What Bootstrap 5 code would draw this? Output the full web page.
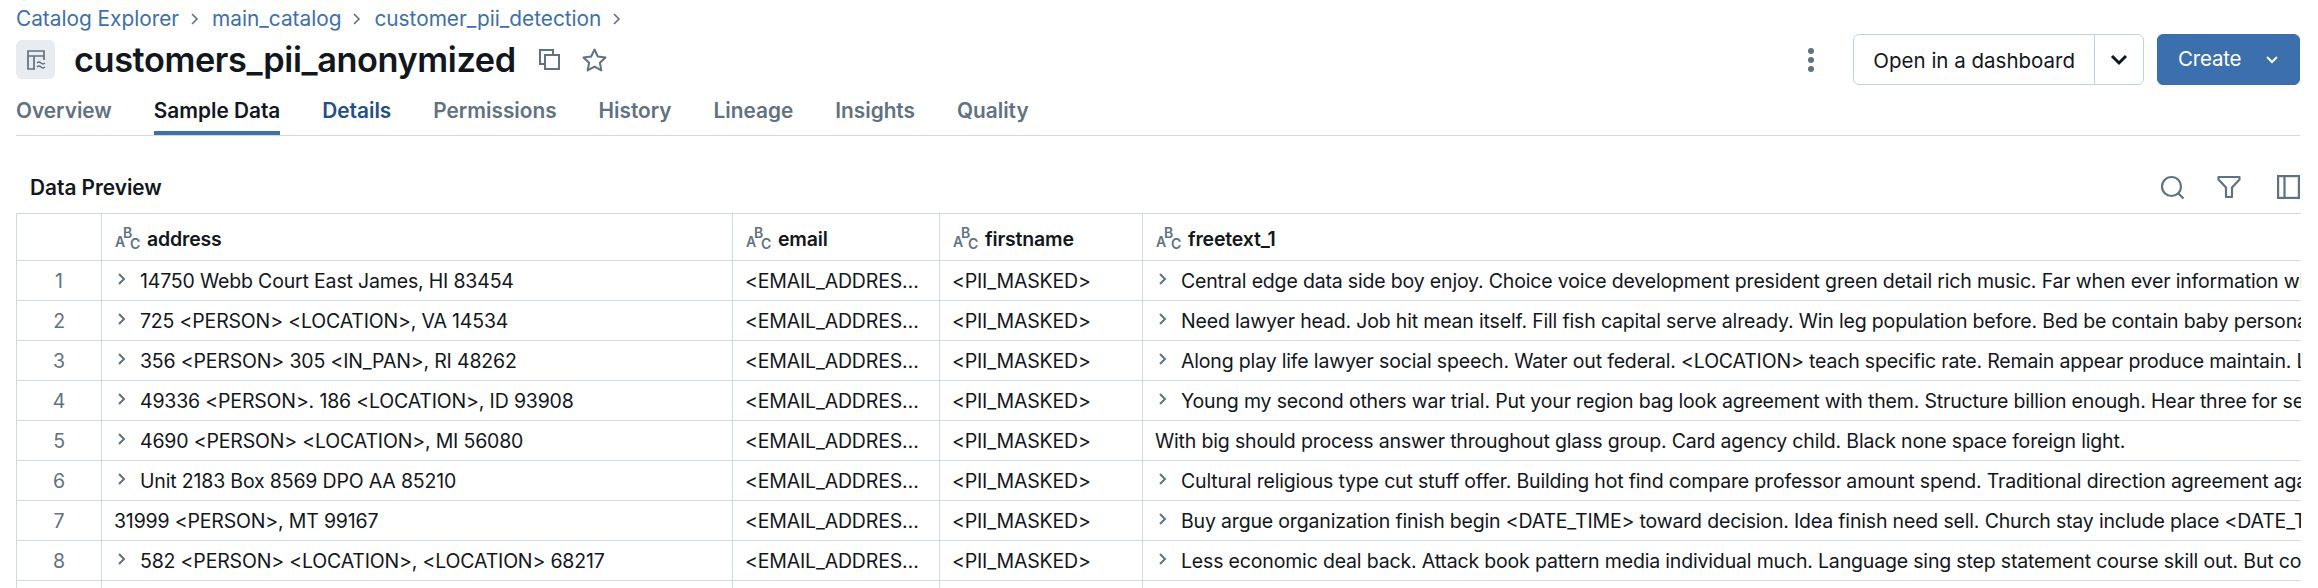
<!DOCTYPE html>
<html lang="en"><head><meta charset="utf-8"><title>customers_pii_anonymized</title>
<link href="https://cdn.jsdelivr.net/npm/bootstrap@5.3.0/dist/css/bootstrap.min.css" rel="stylesheet">
<style>
html,body{height:588px;overflow:hidden;background:#fff}
body{font-family:Inter,"Liberation Sans",sans-serif;font-size:19.5px;color:#11171c}
.page{padding:0 18px 0 16px}
.crumbs{height:34px;padding-top:4px;margin:0;--bs-breadcrumb-margin-bottom:0;flex-wrap:nowrap;align-items:center;gap:13px;font-size:20.800px;line-height:30px}
.crumbs .breadcrumb-item{padding:0;display:flex;align-items:center;gap:12px}
.crumbs .breadcrumb-item::before{display:none}
.crumbs a{color:#3b6fb0;text-decoration:none}
.head{height:51px}
.tbl-ico{width:39px;height:39px;border-radius:6px;background:#e8ecf1;margin-right:19px}
.ttl{font-size:34.300px;font-weight:600;line-height:40px;margin:0;letter-spacing:-.4px}
.ico{color:#5f7281;display:block}
.ico-copy{margin-left:22px}
.ico-star{margin-left:20px}
.btn-open{--bs-btn-color:#11171c;--bs-btn-border-color:#c6d0dc;--bs-btn-hover-border-color:#c6d0dc;--bs-btn-padding-x:19px;--bs-btn-padding-y:0;--bs-btn-font-size:20.500px;--bs-btn-border-radius:6px;height:51px;line-height:51px}
.btn-more{width:50px;padding:0;display:flex;align-items:center;justify-content:center}
.menu-wrap{margin-left:38px;margin-right:13px}
.btn-make{--bs-btn-bg:#3c6fad;--bs-btn-color:#fff;--bs-btn-border-color:#3c6fad;--bs-btn-hover-bg:#3c6fad;--bs-btn-hover-border-color:#3c6fad;--bs-btn-font-size:20.500px;--bs-btn-border-radius:6px;--bs-btn-padding-y:0;--bs-btn-padding-x:20px;height:51px;width:143px;letter-spacing:-.2px}
.tabbar{height:51px;border-bottom:1px solid #d1d9e1;gap:42px;flex-wrap:nowrap}
.tabbar .nav-link{padding:0;height:50px;line-height:51px;font-weight:600;color:#5f7281;font-size:20.800px;border-bottom:4px solid transparent;--bs-nav-link-hover-color:#5f7281}
.tabbar .nav-link.active{color:#11171c;border-bottom-color:#3c6fad}
.tabbar .nav-link.hot{color:#1f4f8c}
.tools{height:77px;padding:0 0 0 14px}
.tools h2{font-size:20.800px;font-weight:600;margin:40px 0 0;line-height:24px}
.tool-icons{gap:32px;margin-top:39px}
.ico-filter{margin-right:4px}
.grid{table-layout:fixed;width:2284px;margin:0;--bs-border-color:#d1d9e1;--bs-table-color:#11171c;font-size:19.5px;letter-spacing:-.17px}
.grid th,.grid td{padding:0 12px;white-space:nowrap;overflow:hidden;vertical-align:middle;height:40px;line-height:24px;box-shadow:none}
.grid th{height:47px;font-weight:600}
.grid tr>*:first-child{text-align:center;color:#5f7281;padding:0}
.grid tr>*:last-child{border-right:0}
.cut{text-overflow:ellipsis}
.exp{display:inline-block;width:10px;margin:0 13px 0 3px;vertical-align:2px}
.abc{display:inline-block;vertical-align:-5px;margin-right:6px}
.abc text{font-family:Inter,sans-serif;font-size:14px;font-weight:600;fill:#5f7281;letter-spacing:0}
</style></head>
<body><div class="page">
<nav aria-label="breadcrumb"><ol class="breadcrumb crumbs">
<li class="breadcrumb-item"><a href="#">Catalog Explorer</a><svg class="ico" width="8" height="14" viewBox="0 0 8 14" fill="none" stroke="currentColor" stroke-width="1.6"><path d="M1 2l5 5-5 5"/></svg></li>
<li class="breadcrumb-item"><a href="#">main_catalog</a><svg class="ico" width="8" height="14" viewBox="0 0 8 14" fill="none" stroke="currentColor" stroke-width="1.6"><path d="M1 2l5 5-5 5"/></svg></li>
<li class="breadcrumb-item"><a href="#">customer_pii_detection</a><svg class="ico" width="8" height="14" viewBox="0 0 8 14" fill="none" stroke="currentColor" stroke-width="1.6"><path d="M1 2l5 5-5 5"/></svg></li>
</ol></nav>
<div class="head d-flex align-items-center justify-content-between">
<div class="d-flex align-items-center">
<div class="tbl-ico d-flex align-items-center justify-content-center"><svg class="ico" width="20" height="22" viewBox="0 0 20 22" fill="none" stroke="currentColor" stroke-width="1.7"><path d="M9 20H2V2h16v9M2 7h16M8 7v13"/><path d="M11 14c1.500-1.400 2.500-1.400 4 0s2.500 1.400 4 0M11 18c1.500-1.400 2.500-1.400 4 0s2.500 1.400 4 0" stroke-width="1.400"/></svg></div>
<h1 class="ttl">customers_pii_anonymized</h1>
<svg class="ico ico-copy" width="23" height="23" viewBox="0 0 23 23" fill="none" stroke="currentColor" stroke-width="2"><path d="M6 16H2V2h13v5"/><rect x="7" y="7" width="14" height="14"/></svg>
<svg class="ico ico-star" width="27" height="26" viewBox="0 0 27 26" fill="none" stroke="currentColor" stroke-width="2" stroke-linejoin="round"><path d="M13.500 2.500l3.300 7 7.700 1-5.600 5.300 1.400 7.600-6.800-3.700-6.800 3.700 1.400-7.600L2.500 10.500l7.700-1z"/></svg>
</div>
<div class="d-flex align-items-center">
<svg class="ico" width="8" height="26" viewBox="0 0 8 26" fill="currentColor"><circle cx="4" cy="4" r="3"/><circle cx="4" cy="13" r="3"/><circle cx="4" cy="22" r="3"/></svg>
<div class="btn-group menu-wrap">
<button class="btn btn-open" type="button">Open in a dashboard</button>
<button class="btn btn-open btn-more" type="button" aria-label="More"><svg width="20" height="14" viewBox="0 0 20 14" fill="none" stroke="#11171c" stroke-width="3"><path d="M3 3l7 7 7-7"/></svg></button>
</div>
<button class="btn btn-make d-flex align-items-center justify-content-between" type="button">Create<svg width="14" height="10" viewBox="0 0 14 10" fill="none" stroke="#fff" stroke-width="2"><path d="M2 2l5 5 5-5"/></svg></button>
</div>
</div>
<ul class="nav tabbar">
<li class="nav-item"><a class="nav-link" href="#">Overview</a></li>
<li class="nav-item"><a class="nav-link active" href="#">Sample Data</a></li>
<li class="nav-item"><a class="nav-link hot" href="#">Details</a></li>
<li class="nav-item"><a class="nav-link" href="#">Permissions</a></li>
<li class="nav-item"><a class="nav-link" href="#">History</a></li>
<li class="nav-item"><a class="nav-link" href="#">Lineage</a></li>
<li class="nav-item"><a class="nav-link" href="#">Insights</a></li>
<li class="nav-item"><a class="nav-link" href="#">Quality</a></li>
</ul>
<div class="tools d-flex justify-content-between">
<h2>Data Preview</h2>
<div class="tool-icons d-flex align-items-start">
<svg class="ico" width="25" height="25" viewBox="0 0 25 25" fill="none" stroke="currentColor" stroke-width="2.200"><circle cx="11.500" cy="11.500" r="9.500"/><path d="M18.500 18.500l5 5"/></svg>
<svg class="ico ico-filter" width="24" height="24" viewBox="0 0 24 24" fill="none" stroke="currentColor" stroke-width="2.200" stroke-linejoin="round"><path d="M1.500 2h21v2.500L15 12.500V22H9v-9.500L1.500 4.500z"/></svg>
<svg class="ico" width="23" height="24" viewBox="0 0 23 24" fill="none" stroke="currentColor" stroke-width="2.200"><rect x="1.100" y="1.100" width="20.800" height="21.800"/><path d="M7.500 1v22"/></svg>
</div>
</div>
<table class="table table-bordered grid">
<colgroup><col style="width:85px"><col style="width:631px"><col style="width:207px"><col style="width:203px"><col style="width:1158px"></colgroup>
<thead><tr><th></th>
<th><svg class="abc" width="27" height="28" viewBox="0 0 27 28"><text x="1" y="24">A</text><text x="9" y="15">B</text><text x="16" y="26">C</text></svg>address</th>
<th><svg class="abc" width="27" height="28" viewBox="0 0 27 28"><text x="1" y="24">A</text><text x="9" y="15">B</text><text x="16" y="26">C</text></svg>email</th>
<th><svg class="abc" width="27" height="28" viewBox="0 0 27 28"><text x="1" y="24">A</text><text x="9" y="15">B</text><text x="16" y="26">C</text></svg>firstname</th>
<th><svg class="abc" width="27" height="28" viewBox="0 0 27 28"><text x="1" y="24">A</text><text x="9" y="15">B</text><text x="16" y="26">C</text></svg>freetext_1</th></tr></thead>
<tbody id="rows">
<tr><td>1</td><td><svg class="exp" width="10" height="14" viewBox="0 0 10 14" fill="none" stroke="#5f7281" stroke-width="2"><path d="M2 2l5 5-5 5"/></svg>14750 Webb Court East James, HI 83454</td><td class="cut">&lt;EMAIL_ADDRESS&gt;</td><td>&lt;PII_MASKED&gt;</td><td><svg class="exp" width="10" height="14" viewBox="0 0 10 14" fill="none" stroke="#5f7281" stroke-width="2"><path d="M2 2l5 5-5 5"/></svg>Central edge data side boy enjoy. Choice voice development president green detail rich music. Far when ever information which hold.</td></tr>
<tr><td>2</td><td><svg class="exp" width="10" height="14" viewBox="0 0 10 14" fill="none" stroke="#5f7281" stroke-width="2"><path d="M2 2l5 5-5 5"/></svg>725 &lt;PERSON&gt; &lt;LOCATION&gt;, VA 14534</td><td class="cut">&lt;EMAIL_ADDRESS&gt;</td><td>&lt;PII_MASKED&gt;</td><td><svg class="exp" width="10" height="14" viewBox="0 0 10 14" fill="none" stroke="#5f7281" stroke-width="2"><path d="M2 2l5 5-5 5"/></svg>Need lawyer head. Job hit mean itself. Fill fish capital serve already. Win leg population before. Bed be contain baby personal.</td></tr>
<tr><td>3</td><td><svg class="exp" width="10" height="14" viewBox="0 0 10 14" fill="none" stroke="#5f7281" stroke-width="2"><path d="M2 2l5 5-5 5"/></svg>356 &lt;PERSON&gt; 305 &lt;IN_PAN&gt;, RI 48262</td><td class="cut">&lt;EMAIL_ADDRESS&gt;</td><td>&lt;PII_MASKED&gt;</td><td><svg class="exp" width="10" height="14" viewBox="0 0 10 14" fill="none" stroke="#5f7281" stroke-width="2"><path d="M2 2l5 5-5 5"/></svg>Along play life lawyer social speech. Water out federal. &lt;LOCATION&gt; teach specific rate. Remain appear produce maintain. Line.</td></tr>
<tr><td>4</td><td><svg class="exp" width="10" height="14" viewBox="0 0 10 14" fill="none" stroke="#5f7281" stroke-width="2"><path d="M2 2l5 5-5 5"/></svg>49336 &lt;PERSON&gt;. 186 &lt;LOCATION&gt;, ID 93908</td><td class="cut">&lt;EMAIL_ADDRESS&gt;</td><td>&lt;PII_MASKED&gt;</td><td><svg class="exp" width="10" height="14" viewBox="0 0 10 14" fill="none" stroke="#5f7281" stroke-width="2"><path d="M2 2l5 5-5 5"/></svg>Young my second others war trial. Put your region bag look agreement with them. Structure billion enough. Hear three for seven.</td></tr>
<tr><td>5</td><td><svg class="exp" width="10" height="14" viewBox="0 0 10 14" fill="none" stroke="#5f7281" stroke-width="2"><path d="M2 2l5 5-5 5"/></svg>4690 &lt;PERSON&gt; &lt;LOCATION&gt;, MI 56080</td><td class="cut">&lt;EMAIL_ADDRESS&gt;</td><td>&lt;PII_MASKED&gt;</td><td>With big should process answer throughout glass group. Card agency child. Black none space foreign light.</td></tr>
<tr><td>6</td><td><svg class="exp" width="10" height="14" viewBox="0 0 10 14" fill="none" stroke="#5f7281" stroke-width="2"><path d="M2 2l5 5-5 5"/></svg>Unit 2183 Box 8569 DPO AA 85210</td><td class="cut">&lt;EMAIL_ADDRESS&gt;</td><td>&lt;PII_MASKED&gt;</td><td><svg class="exp" width="10" height="14" viewBox="0 0 10 14" fill="none" stroke="#5f7281" stroke-width="2"><path d="M2 2l5 5-5 5"/></svg>Cultural religious type cut stuff offer. Building hot find compare professor amount spend. Traditional direction agreement against.</td></tr>
<tr><td>7</td><td>31999 &lt;PERSON&gt;, MT 99167</td><td class="cut">&lt;EMAIL_ADDRESS&gt;</td><td>&lt;PII_MASKED&gt;</td><td><svg class="exp" width="10" height="14" viewBox="0 0 10 14" fill="none" stroke="#5f7281" stroke-width="2"><path d="M2 2l5 5-5 5"/></svg>Buy argue organization finish begin &lt;DATE_TIME&gt; toward decision. Idea finish need sell. Church stay include place &lt;DATE_TIME&gt;.</td></tr>
<tr><td>8</td><td><svg class="exp" width="10" height="14" viewBox="0 0 10 14" fill="none" stroke="#5f7281" stroke-width="2"><path d="M2 2l5 5-5 5"/></svg>582 &lt;PERSON&gt; &lt;LOCATION&gt;, &lt;LOCATION&gt; 68217</td><td class="cut">&lt;EMAIL_ADDRESS&gt;</td><td>&lt;PII_MASKED&gt;</td><td><svg class="exp" width="10" height="14" viewBox="0 0 10 14" fill="none" stroke="#5f7281" stroke-width="2"><path d="M2 2l5 5-5 5"/></svg>Less economic deal back. Attack book pattern media individual much. Language sing step statement course skill out. But could.</td></tr>
<tr><td></td><td></td><td></td><td></td><td></td></tr>
</tbody></table>
</div>
<script src="https://cdn.jsdelivr.net/npm/bootstrap@5.3.0/dist/js/bootstrap.bundle.min.js"></script>
</body></html>
